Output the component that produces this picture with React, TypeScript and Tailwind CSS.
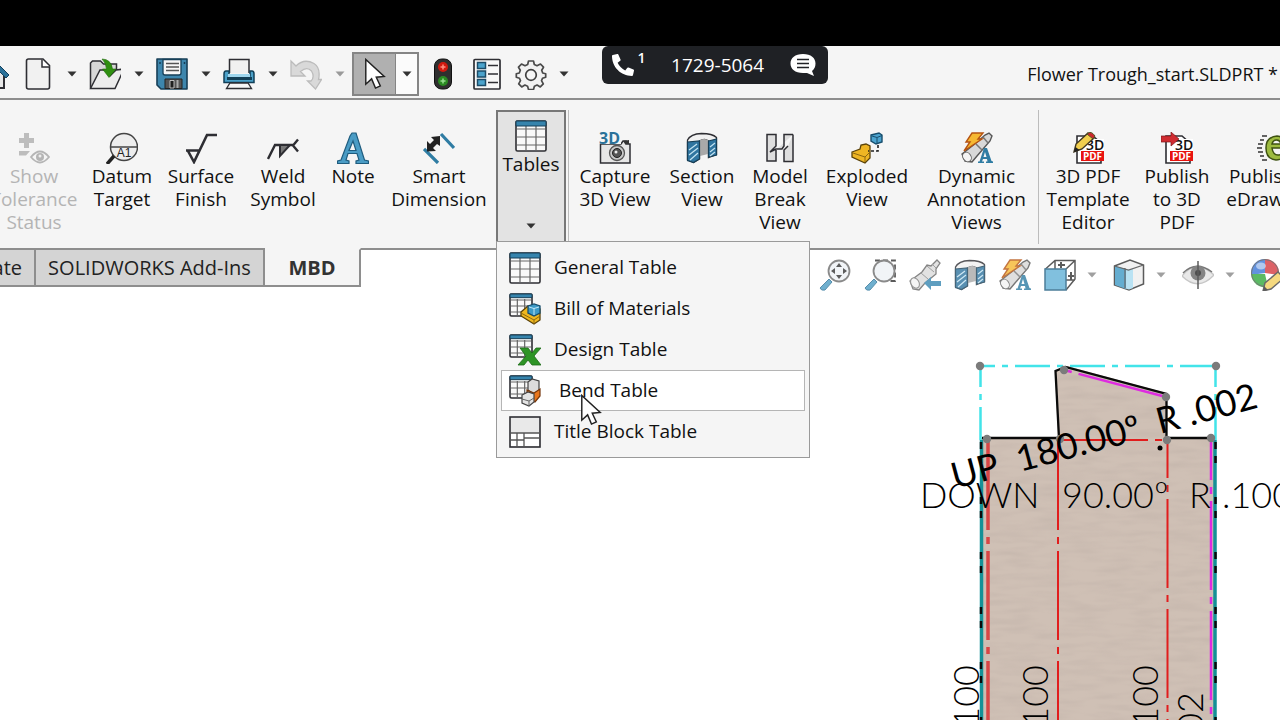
import type { FC, ReactNode } from 'react'
import { FaPhoneAlt } from 'react-icons/fa'

const Svg: FC<{ children: ReactNode; className?: string }> = ({ children, className = '' }) => (
  <svg viewBox="0 0 32 32" fill="none" className={`size-8 shrink-0 ${className}`} aria-hidden="true">
    {children}
  </svg>
)

const Caret: FC<{ className?: string }> = ({ className = 'fill-[#333]' }) => (
  <svg viewBox="0 0 10 6" className={`h-1.5 w-2.5 shrink-0 ${className}`} aria-hidden="true">
    <path d="M.5 .5h9L5 5.5z" />
  </svg>
)

const DARK = '#2e2e33'

const HomeIcon = () => (
  <Svg>
    <path d="M6 15v15h20V15L16 5z" fill="#e8e8e8" stroke={DARK} strokeWidth="2" />
    <path d="M1 17L16 2l15 15-3 3L16 8 4 20z" fill="#2a7199" stroke="#123f5c" />
  </Svg>
)

const NewIcon = () => (
  <Svg>
    <path d="M4.500 3q0-2 2-2H21l6.500 6.500V29q0 2-2 2h-19q-2 0-2-2z" fill="#f1f1f1" stroke={DARK} strokeWidth="1.600" />
    <path d="M20 1.500V9h7.500" fill="#fff" stroke={DARK} strokeWidth="1.500" />
  </Svg>
)

const OpenIcon = () => (
  <Svg>
    <path d="M1.500 30V5l2-2h8l3 3h13v6" fill="#d7d7d7" stroke={DARK} strokeWidth="1.500" />
    <path d="M1.500 30.500L11 12h5l5 6 6-6 8-1-9 19.500z" fill="#ececec" stroke={DARK} strokeWidth="1.500" />
    <path d="M13 1q9 0 10.500 10H27l-7 8.500L13.500 11h4Q17 5 13 1z" fill="#2f8f10" stroke="#1d6a08" strokeWidth=".6" />
  </Svg>
)

const SaveIcon = () => (
  <Svg>
    <path d="M1 1h30v30H5l-4-4z" fill="#3d86ad" stroke="#173f57" strokeWidth="1.600" strokeLinejoin="round" />
    <path d="M7 1.500h18V15q0 2-2 2H9q-2 0-2-2z" fill="#f7f7f7" stroke="#173f57" strokeWidth="1.300" />
    <path d="M10 5.500h13M10 9h13M10 12.500h13" stroke="#555" strokeWidth="1.400" />
    <path d="M9 30.500V21h17v9.500z" fill="#555" stroke="#222" />
    <path d="M14 22.500h4v7.500h-4z" fill="#1f1f1f" stroke="#ddd" strokeWidth=".8" />
    <path d="M21.500 22v8" stroke="#aaa" strokeWidth="2" />
    <path d="M4 4v2M28.500 4v2" stroke="#173f57" strokeWidth="1.500" />
  </Svg>
)

const PrintIcon = () => (
  <Svg>
    <path d="M6.500 15V1.500H26V15" fill="#f0f0f0" stroke={DARK} strokeWidth="1.500" />
    <path d="M3 13q-2 0-2 3v8.500h30V16q0-3-2-3h-2v5H6v-5z" fill="#4aa0c8" stroke="#123f57" strokeWidth="1.500" />
    <path d="M5 16h22v3H5z" fill="#9ed6ee" />
    <path d="M4 20.500h25" stroke="#123f57" strokeWidth="3" />
    <path d="M7 25h18l3.500 5.500H3.500z" fill="#f7f7f7" stroke={DARK} strokeWidth="1.300" />
  </Svg>
)

const UndoIcon = () => (
  <Svg>
    <path
      d="M1 3v15h14l-4.500-4.500Q17 8 21.500 13q3.500 6-.5 10h-3.500l8 8 6-9.500h-3Q31 10 24 5.500 14 0 6 8z"
      fill="#d9d9d9"
      stroke="#bcbcbc"
      strokeWidth="1.300"
    />
  </Svg>
)

const Pointer: FC<{ className?: string }> = ({ className = '' }) => (
  <svg viewBox="0 0 22 33" className={`h-8 w-[22px] ${className}`} aria-hidden="true">
    <path d="M1.500 1.500V27l6-5.500 4 9.500 5-2.200-4.200-9L20.500 19z" className="fill-white stroke-[#222]" strokeWidth="1.500" />
  </svg>
)

const TrafficIcon = () => (
  <Svg>
    <rect x="7.500" y="1" width="17" height="30" rx="7" fill="#2f2f2f" stroke="#111" />
    <circle cx="16" cy="9" r="5" fill="#d0190f" />
    <circle cx="16" cy="23" r="5" fill="#2a8a22" />
    <path d="M16 6.500v5M13.500 9h5" stroke="#ff8e80" strokeWidth="1.500" />
    <path d="M16 20.500v5M13.500 23h5" stroke="#97dd90" strokeWidth="1.500" />
  </Svg>
)

const ListIcon = () => (
  <Svg>
    <rect x="3" y="1.500" width="26" height="29.500" rx="1" fill="#f7f7f7" stroke={DARK} strokeWidth="1.700" />
    {[4.500, 13, 21.500].map(y => (
      <g key={y}>
        <rect x="6.500" y={y} width="8" height="6" fill="#4ba3cc" stroke="#1c4c68" strokeWidth="1.500" />
        <path d={`M17 ${y + 3}h10`} stroke={DARK} strokeWidth="1.500" />
      </g>
    ))}
  </Svg>
)

const GearIcon = () => (
  <Svg>
    <path
      d="M13.500 3h5l.8 3.500 2.700 1.200L25.500 6l3 3.200-1.800 3 1 2.800 3 .8v3.400l-3.200 1-1 2.500 1.800 3.200-3 3-3.200-1.900-2.700 1.200-.9 3.300h-5l-.9-3.300-2.700-1.200L6.700 28.900l-3-3 1.800-3.200-1-2.500-3.200-1v-3.400l3-.8 1-2.800-1.800-3L6.500 6 10 7.700l2.700-1.200z"
      fill="#f2f2f2"
      stroke="#4a4a4a"
      strokeWidth="1.700"
      strokeLinejoin="round"
    />
    <circle cx="16" cy="17" r="5.300" fill="#f5f5f5" stroke="#3f3f3f" strokeWidth="1.700" />
  </Svg>
)

const ToleranceIcon = () => (
  <Svg>
    <path d="M6 1h5v5h5v5h-5v5H6v-5H1V6h5zM1 19h11l-4 4.500H1z" fill="#bdbdbd" />
    <path d="M13 25q9-11 18 0-9 11-18 0z" fill="#f5f5f5" stroke="#b5b5b5" strokeWidth="1.800" />
    <circle cx="22" cy="25" r="4" fill="#b5b5b5" />
    <circle cx="22" cy="24" r="1.500" fill="#eee" />
  </Svg>
)

const DatumIcon = () => (
  <Svg>
    <circle cx="18" cy="15" r="13.500" fill="#ededed" stroke="#444" strokeWidth="1.500" />
    <path d="M4.500 15h27" stroke="#444" strokeWidth="1.500" />
    <text x="18" y="25" textAnchor="middle" className="fill-[#222] font-['Liberation_Sans'] text-[12px]">A1</text>
    <path d="M8 24l-7 8" stroke="#222" strokeWidth="3.500" />
  </Svg>
)

const SurfaceIcon = () => (
  <Svg>
    <path d="M1 18.500h14M3 19l6 11 13-27h10" stroke={DARK} strokeWidth="2.600" />
  </Svg>
)

const WeldIcon = () => (
  <Svg>
    <path d="M1 27l7-14h19M31 7.500l-5 6 5 6" stroke={DARK} strokeWidth="2.400" />
    <path d="M13 13v11l10-11z" fill="#777" stroke={DARK} strokeWidth="2" />
  </Svg>
)

const NoteIcon = () => (
  <Svg>
    <path
      d="M15 1h4l8.500 27 4 1v2.500H19V29l3-1-2-6.500h-9L9 28l3 1v2.500H.500V29l3.500-1L13 4zM16 9l-4 9.500h7z"
      fill="#4a9cc5"
      stroke="#1f5c7e"
      strokeWidth="1.200"
      fillRule="evenodd"
    />
  </Svg>
)

const SmartDimIcon = () => (
  <Svg>
    <path d="M18 2l13 14M1 17l14 14" stroke="#2f7ca3" strokeWidth="3.200" />
    <path d="M17 4v10l-3-2-4 4 3 3-9 .5V9l3 3 4-4-3-3z" fill="#222" />
  </Svg>
)

const Grid: FC<{ size?: number; step?: number }> = ({ size = 30, step = 8 }) => (
  <>
    <rect x="1" y="1" width={size} height={size} rx="1.500" fill="#fafafa" stroke={DARK} strokeWidth="1.600" />
    <path
      d={`M2 ${1 + step}h${size - 2}M2 ${1 + step * 2}h${size - 2}M2 ${1 + step * 3}h${size - 2}M${1 + size / 3} 6v${size - 6}M${1 + (size * 2) / 3} 6v${size - 6}`}
      stroke="#666"
      strokeWidth="1.200"
    />
    <path d={`M1 1h${size}v${size / 6}H1z`} fill="#3684ad" stroke="#173f57" />
  </>
)

const TableIcon = () => (
  <Svg>
    <Grid />
  </Svg>
)

const BomIcon = () => (
  <Svg>
    <Grid size={22} step={6} />
    <path d="M12 19l7-6 12 3v11l-6 4-13-8z" fill="#f0b81f" stroke="#5b430a" strokeWidth="1.300" />
    <path d="M12 20l13 7 6-4M25 27v4" stroke="#8d6810" />
    <path d="M19 13l6-2 6 2v7l-6 3-6-3z" fill="#3d9bc8" stroke="#174d6c" strokeWidth="1.300" />
    <path d="M20 14l5 1.500 5-1.500M25 15v7" stroke="#bfe5f6" />
  </Svg>
)

const DesignIcon = () => (
  <Svg>
    <Grid size={22} step={6} />
    <path d="M11 14h8l4 5 4-5h5l-7 8 7 9h-9l-4-5-4 5H9l8-9z" fill="#2e9426" stroke="#1c6b17" strokeWidth=".8" />
  </Svg>
)

const BendIcon = () => (
  <Svg>
    <Grid size={22} step={6} />
    <path d="M19 7l4-3 7 2v10l-6 3-5-4z" fill="#dcdcdc" stroke="#444" strokeWidth="1.200" />
    <path d="M18 15l7 3 6-4v7l-5 6-8-4z" fill="#e8761d" stroke="#74350a" strokeWidth="1.200" />
    <path d="M13 20l6-3 6 2v8l-5 4-7-3z" fill="#e4e4e4" stroke="#444" strokeWidth="1.200" />
    <path d="M13 24l7 2 5-3M20 26v5" stroke="#666" />
  </Svg>
)

const TitleBlockIcon = () => (
  <Svg>
    <rect x="1" y="1" width="30" height="30" fill="#e9e9e9" stroke={DARK} strokeWidth="1.600" />
    <path d="M2 17h28v13H2z" fill="#fff" />
    <path d="M1 17h30M1 24h14M15 17v14M8 17v14M15 22h16" stroke="#555" strokeWidth="1.300" />
  </Svg>
)

const CaptureIcon = () => (
  <Svg>
    <path d="M1.500 12H22l2-3h3v3h4v19H1.500z" fill="#e6e6e6" stroke={DARK} strokeWidth="1.500" />
    <path d="M24 9l2 3h4V8" fill="#333" />
    <circle cx="18" cy="21" r="7.500" fill="#c9c9c9" stroke="#555" strokeWidth="1.300" />
    <circle cx="18" cy="21" r="4.500" fill="#555" stroke="#222" />
    <circle cx="17" cy="20" r="1.500" fill="#eee" />
    <rect x="0" y="0" width="22" height="12" fill="#f5f5f5" />
    <text x="0" y="12" className="fill-[#2b7299] font-['Open_Sans'] text-[16px] font-bold">3D</text>
  </Svg>
)

const SectionIcon = () => (
  <Svg>
    <path d="M1.500 8q3-6 14-6.500 11 0 15 4v17l-8 3V9q-4-3-9 0v18l-6 3.500-6-3z" fill="#f1f1f1" stroke={DARK} strokeWidth="1.300" />
    <path d="M14 8q4-2 8 0v14l-8 2z" fill="#a9a9a9" />
    <path d="M1.500 10l12-1v18l-6 3.500-6-2zM22.500 9l8-2v16l-8 2z" fill="#3075a0" stroke="#173f57" strokeWidth="1.200" />
    <path d="M3 18l8-6M3 23l9-7M4 28l8-7M24 15l5-4M24 20l5-4M24 24l5-4" stroke="#c4e4f2" strokeWidth="1.200" />
  </Svg>
)

const BreakIcon = () => (
  <Svg>
    <path d="M3 2.500h9V14l-6 6 6-3v12H3z" fill="#dedede" stroke={DARK} strokeWidth="1.500" />
    <path d="M29 2.500h-9V14l-2 3h-5M29 2.500v27h-9V18l4-4" fill="#dedede" stroke={DARK} strokeWidth="1.500" />
  </Svg>
)

const ExplodedIcon = () => (
  <Svg>
    <path d="M1 20l8-3 1-4 5-1 4 2v12l-5 5-13-6z" fill="#eeb523" stroke="#5b430a" strokeWidth="1.300" />
    <path d="M2 21l12 4 5-5M14 25v5" stroke="#8d6810" />
    <path d="M20 3l8-2 3 2v7l-6 2-5-3z" fill="#4ca4cf" stroke="#174d6c" strokeWidth="1.400" />
    <path d="M21 4l5 1.500 5-2M26 6v5" stroke="#174d6c" />
    <path d="M27 13v6H17" stroke="#222" strokeWidth="1.600" strokeDasharray="3 2" />
  </Svg>
)

const DynamicIcon = () => (
  <Svg>
    <path d="M1 22l14-11 9-8 4-2 3 3-2 5-13 15-5 6-7-1z" fill="#d8d8d8" stroke="#555" strokeWidth="1.400" />
    <ellipse cx="6" cy="25" rx="4" ry="5" transform="rotate(-35 6 25)" fill="#f4f4f4" stroke="#666" />
    <path d="M15 12l6 6M22 5l5 6" stroke="#777" strokeWidth="1.500" />
    <path d="M11 1h11l-5 6h4L3 19l6-9H5z" fill="#f6b832" stroke="#b55312" strokeWidth="1.400" />
    <path d="M23 16h3l4.500 13 1.500.5V31h-7v-1.500h1.500L26 27h-4l-1 2.500H23V31h-6v-1.500h1.500zM24 20l-1.500 5h3z" fill="#2f7ca3" fillRule="evenodd" />
  </Svg>
)

const PdfBase = () => (
  <>
    <path d="M5 4h16l8 7v20H5z" fill="#fff" stroke={DARK} strokeWidth="1.600" />
    <path d="M15 7h17v12H15z" fill="#fff" />
    <text x="14" y="18" className="fill-[#111] font-['Open_Sans'] text-[14px] font-semibold">3D</text>
    <rect x="9" y="19" width="23" height="10" fill="#e8130f" />
    <text x="20.500" y="27.500" textAnchor="middle" className="fill-white font-['Open_Sans'] text-[10px] font-bold">PDF</text>
  </>
)

const PdfEditIcon = () => (
  <Svg>
    <PdfBase />
    <path d="M2 20l2-8L16 1l6 5L10 17z" fill="#f1cf4e" stroke="#3f3620" strokeWidth="1.400" />
    <path d="M15 2q4-4 8 2l-2 3z" fill="#c9282d" stroke="#552" />
    <path d="M2 20l1.500-5 4 3z" fill="#222" />
  </Svg>
)

const PdfPublishIcon = () => (
  <Svg>
    <PdfBase />
    <path d="M0 4h10V0l8 7-8 7v-4H0z" fill="#d02c31" stroke="#7c171a" strokeWidth=".7" />
  </Svg>
)

const EDrawingsIcon = () => (
  <Svg>
    <path d="M5 4h5M3 8h4M1 12h5M0 16h5M1 20h5M3 24h4M5 28h5" stroke="#333" strokeWidth="1.500" />
    <path
      d="M29 22q-4 6-10 6-10-1-10-12T20 4q10 1 10 12H15q1 7 6 7 3 0 4-2zM15 12h9q-1-4-4.500-4T15 12z"
      fill="#9dbb40"
      stroke="#3e5212"
      strokeWidth="1.500"
      fillRule="evenodd"
    />
  </Svg>
)

const Lens = () => (
  <>
    <path d="M1 29l9-9 3 3-7 8q-4 1-5-2z" fill="#4c9cc2" stroke="#2f7397" />
    <circle cx="20" cy="12" r="10.500" fill="#eef2f6" stroke="#6d6d6d" strokeWidth="1.800" />
  </>
)

const ZoomFitIcon = () => (
  <Svg>
    <Lens />
    <path d="M20 4l3 4h-6zM20 20l3-4h-6zM12 12l4-3v6zM28 12l-4-3v6z" fill="#333" />
  </Svg>
)

const ZoomAreaIcon = () => (
  <Svg>
    <path d="M11 1.500h20V22H20" stroke="#333" strokeWidth="1.800" strokeDasharray="5 3" />
    <Lens />
  </Svg>
)

const PreviousIcon = () => (
  <Svg>
    <path d="M1 22l12-9 5-7 4 1 6-6 3 3-4 6v5l-11 9-6 7-6-1z" fill="#dcdcdc" stroke="#666" strokeWidth="1.300" />
    <ellipse cx="6" cy="24" rx="4" ry="5.500" transform="rotate(-30 6 24)" fill="#f3f3f3" stroke="#777" />
    <path d="M12 14l7 6M18 7l7 6M23 5l4 4" stroke="#888" />
    <path d="M15 24l7-6v4h10v5H22v4z" fill="#3787b1" />
  </Svg>
)

const CubeFrameIcon = () => (
  <Svg>
    <path d="M1.500 10L11 1.500h20V20l-9 11M22 10l9-8.500M11 2v8M22 21h9" stroke="#333" strokeWidth="1.500" />
    <path d="M17 3v6M14 6h7M27 13v8M24 17h6" stroke="#333" strokeWidth="2" />
    <rect x="1" y="10" width="21" height="21" fill="#62b1d6" stroke="#215e80" strokeWidth="1.500" />
  </Svg>
)

const DisplayIcon = () => (
  <Svg>
    <path d="M1.500 7L17 1l13.500 5v19L16 31 1.500 26z" fill="#eee" stroke="#333" strokeWidth="1.500" />
    <path d="M2 7l11 3v20L2 26z" fill="#3f99c5" />
    <path d="M13 10h7v19l-4 1.500-3-1z" fill="#a8dbf1" />
    <path d="M1.500 7l14 4 15-5M12 9v20" stroke="#444" strokeWidth="1.200" />
  </Svg>
)

const EyeIcon = () => (
  <Svg>
    <path d="M0 17Q14-1 32 16 16 33 0 17z" fill="#e4e4e4" stroke="#b9b9b9" strokeWidth="1.300" />
    <path d="M1 14Q14 1 30 13" stroke="#555" strokeWidth="1.500" />
    <circle cx="16" cy="14" r="7.500" fill="#666" />
    <circle cx="16" cy="14" r="3" fill="#222" />
    <path d="M16 2v28" stroke="#333" strokeWidth="1.500" />
  </Svg>
)

const SphereIcon = () => (
  <Svg>
    <path d="M14 14V0A14 14 0 0 0 0 16z" fill="#3c78d8" />
    <path d="M14 14V0a14 14 0 0 1 14 16z" fill="#d53a40" />
    <path d="M14 15H0a14 14 0 0 0 17 13z" fill="#33a93e" />
    <circle cx="14" cy="14" r="13.500" stroke="#555" />
    <ellipse cx="10" cy="7" rx="5" ry="3.500" fill="#fff" opacity=".5" />
    <path d="M12 32l2-8 13-11 6 6-13 11z" fill="#f3d060" stroke="#444" strokeWidth="1.400" />
    <path d="M12 32l1-5 4 4z" fill="#333" />
  </Svg>
)

const quickActions = [
  { name: 'New', icon: <NewIcon /> },
  { name: 'Open', icon: <OpenIcon /> },
  { name: 'Save', icon: <SaveIcon /> },
  { name: 'Print', icon: <PrintIcon /> },
  { name: 'Undo', icon: <UndoIcon />, disabled: true },
]

const QuickAccess = () => (
  <header className="relative flex h-[54px] items-center border-b-2 border-[#8e8e8e] bg-[#f5f5f5] pt-1">
    <button aria-label="Home" className="flex w-[17px] justify-end pr-[7px]">
      <HomeIcon />
    </button>
    {quickActions.map(({ name, icon, disabled }) => (
      <div key={name} className="flex h-11 shrink-0">
        <button aria-label={name} disabled={disabled} className="flex w-[42px] items-center justify-center">
          {icon}
        </button>
        <button aria-label={`${name} options`} disabled={disabled} className="flex w-[25px] items-center justify-center">
          <Caret className={disabled ? 'fill-[#9a9a9a]' : 'fill-[#333]'} />
        </button>
      </div>
    ))}
    <div className="mr-0.5 flex h-11 shrink-0 border-2 border-[#858585]">
      <button aria-label="Select" className="flex w-[42px] items-center justify-center border-r border-[#858585] bg-[#b0b0b0]">
        <Pointer />
      </button>
      <button aria-label="Select options" className="flex w-[21px] items-center justify-center bg-[#fbfbfb]">
        <Caret />
      </button>
    </div>
    <button aria-label="Rebuild" className="flex w-11 shrink-0 justify-center">
      <TrafficIcon />
    </button>
    <button aria-label="File properties" className="flex w-11 shrink-0 justify-center">
      <ListIcon />
    </button>
    <button aria-label="Options" className="flex w-11 shrink-0 justify-center">
      <GearIcon />
    </button>
    <button aria-label="More options" className="flex h-11 w-[22px] shrink-0 items-center justify-center">
      <Caret />
    </button>
    <h1 className="ml-auto whitespace-nowrap pr-0.5 text-[18px] text-[#111]">Flower Trough_start.SLDPRT *</h1>

    <div className="absolute top-0 left-[47%] flex h-[38px] w-[226px] items-center rounded-md bg-[#1f2125] px-2.5 text-white">
      <FaPhoneAlt className="size-[22px] -scale-x-100 rotate-90" />
      <sup className="ml-1 text-[14px] font-semibold">1</sup>
      <span className="mx-auto text-[19px]">1729-5064</span>
      <svg viewBox="0 0 26 24" className="mr-0.5 h-6 w-[26px]" aria-hidden="true">
        <path d="M13 1C5 1 .500 5 .500 10.500S5 20 13 20h4l7 3-2-5q3.500-3 3.500-7.500C25.500 5 21 1 13 1z" fill="#fff" />
        <path d="M7 6.500h12M7 10.500h12M7 14.500h12" stroke="#1f2125" strokeWidth="1.600" />
      </svg>
    </div>
  </header>
)

const RibbonButton: FC<{ icon: ReactNode; lines: string[]; width: string; disabled?: boolean }> = ({
  icon,
  lines,
  width,
  disabled,
}) => (
  <button
    disabled={disabled}
    className={`flex shrink-0 flex-col items-center pt-8 text-[19px] leading-[23px] whitespace-nowrap text-[#111] disabled:text-[#b4b4b4] ${width}`}
  >
    {icon}
    <span className="mt-px flex flex-col items-center">
      {lines.map(line => (
        <span key={line}>{line}</span>
      ))}
    </span>
  </button>
)

const menuItems = [
  { label: 'General Table', icon: <TableIcon /> },
  { label: 'Bill of Materials', icon: <BomIcon /> },
  { label: 'Design Table', icon: <DesignIcon /> },
  { label: 'Bend Table', icon: <BendIcon />, active: true },
  { label: 'Title Block Table', icon: <TitleBlockIcon /> },
]

const TablesMenu = () => (
  <div className="relative mt-2.5 h-[131px] w-[70px] shrink-0">
    <button
      aria-expanded="true"
      className="flex size-full flex-col items-center border-2 border-b-0 border-[#777] bg-[#e3e3e3] pt-2 text-[19px] leading-[23px] text-[#111]"
    >
      <TableIcon />
      <span className="mt-px">Tables</span>
      <Caret className="mt-auto mb-3 fill-[#333]" />
    </button>
    <ul className="absolute top-full left-0 z-10 w-[314px] border border-[#9a9a9a] bg-[#f5f5f5] px-1 py-[5px]">
      {menuItems.map(({ label, icon, active }) => (
        <li key={label} className="relative">
          <button
            className={`flex h-[41px] w-full items-center border px-[7px] text-[19px] whitespace-nowrap text-[#111] ${
              active ? 'gap-[18px] border-[#b5b5b5] bg-white' : 'gap-[13px] border-transparent'
            }`}
          >
            {icon}
            {label}
          </button>
          {active && <Pointer className="absolute top-6 left-[79px] z-10" />}
        </li>
      ))}
    </ul>
  </div>
)

const Separator: FC<{ className?: string }> = ({ className = '' }) => (
  <div className={`mt-2.5 h-[134px] w-px shrink-0 bg-[#bcbcbc] ${className}`} />
)

const Ribbon = () => (
  <nav className="flex h-[148px] bg-[#f5f5f5]">
    <RibbonButton icon={<ToleranceIcon />} lines={['Show', 'Tolerance', 'Status']} width="-ml-4 w-[100px]" disabled />
    <RibbonButton icon={<DatumIcon />} lines={['Datum', 'Target']} width="w-[76px]" />
    <RibbonButton icon={<SurfaceIcon />} lines={['Surface', 'Finish']} width="w-[82px]" />
    <RibbonButton icon={<WeldIcon />} lines={['Weld', 'Symbol']} width="w-[82px]" />
    <RibbonButton icon={<NoteIcon />} lines={['Note']} width="w-[58px]" />
    <RibbonButton icon={<SmartDimIcon />} lines={['Smart', 'Dimension']} width="w-[114px]" />
    <TablesMenu />
    <Separator className="ml-0.5" />
    <RibbonButton icon={<CaptureIcon />} lines={['Capture', '3D View']} width="w-[92px]" />
    <RibbonButton icon={<SectionIcon />} lines={['Section', 'View']} width="w-[82px]" />
    <RibbonButton icon={<BreakIcon />} lines={['Model', 'Break', 'View']} width="w-[74px]" />
    <RibbonButton icon={<ExplodedIcon />} lines={['Exploded', 'View']} width="w-[100px]" />
    <RibbonButton icon={<DynamicIcon />} lines={['Dynamic', 'Annotation', 'Views']} width="w-[119px]" />
    <Separator className="ml-0.5" />
    <RibbonButton icon={<PdfEditIcon />} lines={['3D PDF', 'Template', 'Editor']} width="w-[98px]" />
    <RibbonButton icon={<PdfPublishIcon />} lines={['Publish', 'to 3D', 'PDF']} width="w-[80px]" />
    <RibbonButton icon={<EDrawingsIcon />} lines={['Publish to', 'eDrawings']} width="w-[112px]" />
  </nav>
)

const viewTools: { name: string; icon: ReactNode; menu?: boolean }[] = [
  { name: 'Zoom to Fit', icon: <ZoomFitIcon /> },
  { name: 'Zoom to Area', icon: <ZoomAreaIcon /> },
  { name: 'Previous View', icon: <PreviousIcon /> },
  { name: 'Section View', icon: <SectionIcon /> },
  { name: 'Dynamic Annotation Views', icon: <DynamicIcon /> },
  { name: 'View Orientation', icon: <CubeFrameIcon />, menu: true },
  { name: 'Display Style', icon: <DisplayIcon />, menu: true },
  { name: 'Hide/Show Items', icon: <EyeIcon />, menu: true },
  { name: 'Edit Appearance', icon: <SphereIcon /> },
]

const TabRow = () => (
  <div className="flex items-start">
    <div className="flex h-[39px] shrink-0 border-b-2 border-[#8e8e8e] text-[20px] text-[#222]">
      <button className="flex w-9 items-center justify-end border-t-2 border-r-2 border-[#8e8e8e] bg-[#d4d4d4] pr-3">
        <span>Evaluate</span>
      </button>
      <button className="w-[229px] whitespace-nowrap border-t-2 border-r-2 border-[#8e8e8e] bg-[#d4d4d4]">
        SOLIDWORKS Add-Ins
      </button>
      <button className="w-24 border-t-2 border-r-2 border-t-transparent border-r-[#8e8e8e] bg-[#f5f5f5] font-bold text-[#333]">
        MBD
      </button>
    </div>
    <div className="flex h-[52px] min-w-0 flex-1 items-center justify-end border-t-2 border-[#8e8e8e]">
      <div className="-mr-[9px] flex shrink-0 opacity-80">
        {viewTools.map(({ name, icon, menu }) => (
          <div key={name} className="flex">
            <button aria-label={name} className="flex w-[45px] justify-center">
              {icon}
            </button>
            {menu && (
              <button aria-label={`${name} options`} className="flex w-6 items-center pl-[5px]">
                <Caret className="fill-[#888]" />
              </button>
            )}
          </div>
        ))}
      </div>
    </div>
  </div>
)

const nodes = [
  [980, 366], [1216, 366], [1064, 370], [1166, 397], [987, 439], [1060, 439], [1167, 440], [1211, 438],
]

const FlatPattern = () => (
  <svg
    viewBox="900 300 380 420"
    className="h-[420px] w-[380px] shrink-0 font-['Lato'] text-[36px] font-light"
    role="img"
    aria-label="Flat pattern"
  >
    <defs>
      <filter id="grain" x="0" y="0" width="100%" height="100%">
        <feTurbulence type="fractalNoise" baseFrequency=".03 .16" numOctaves="2" seed="4" />
        <feColorMatrix values="0 0 0 0 .4  0 0 0 0 .33  0 0 0 0 .3  .4 0 0 0 -.15" />
        <feComposite in2="SourceGraphic" operator="in" />
      </filter>
    </defs>
    <path d="M981 438h77l-3-67 12-5 99 27 1 45h48v290H981z" fill="#cfc0b5" />
    <path d="M981 438h77l-3-67 12-5 99 27 1 45h48v290H981z" filter="url(#grain)" />

    <g fill="none" stroke="#42e4e9" strokeWidth="2.500">
      <path d="M980 366h236" strokeDasharray="35 7 6 7" strokeDashoffset="20" />
      <path d="M980.500 366v74M1215.500 366v74" strokeDasharray="35 7 6 7" strokeDashoffset="14" />
    </g>
    <path d="M982 438h77l-3.500-67 10-4 101 27v44h48" fill="none" stroke="#0a0a0a" strokeWidth="2.300" />
    <path d="M981.500 440v290M1215 440v290" stroke="#149197" strokeWidth="3.500" />
    <path d="M981 442v290M1215.500 442v290" stroke="#0a0a0a" strokeWidth="2.500" strokeDasharray="7 7 7 34" />
    <path d="M988 441v290" stroke="#d84545" strokeWidth="3.500" strokeDasharray="89 7 7 7" />
    <path d="M1058 441v290" stroke="#e11d1d" strokeWidth="2" strokeDasharray="89 7 7 7" />
    <path d="M1167.500 441v290" stroke="#e11d1d" strokeWidth="2" strokeDasharray="89 7 7 7" strokeDashoffset="52" />
    <path d="M1059 440h103" stroke="#e11d1d" strokeWidth="2" strokeDasharray="89 7 7 7" />
    <path d="M1211 440v290" stroke="#de2be0" strokeWidth="2.500" strokeDasharray="89 7 7 7" strokeDashoffset="49" />
    <path d="M1064 370l102 27" stroke="#de2be0" strokeWidth="2.500" strokeDasharray="8 7 200" />
    {nodes.map(([x, y]) => (
      <circle key={`${x}-${y}`} cx={x} cy={y} r="4.200" fill="#7b7b7b" />
    ))}

    <g className="fill-black">
      <text x="920" y="508">DOWN</text>
      <text x="1062" y="508">90.00º</text>
      <text x="1189" y="508">R</text>
      <text x="1222" y="508">.100</text>
      <g className="font-normal">
        <text transform="translate(955 489) rotate(-15)">UP</text>
        <text transform="translate(1020 472) rotate(-15)">180.00º</text>
        <text transform="translate(1160 434) rotate(-15)">R .002</text>
      </g>
      <circle cx="1160" cy="448" r="2.500" />
      {[979, 1048, 1158].map(x => (
        <text key={x} transform={`translate(${x} 665) rotate(-90)`} textAnchor="end">.100</text>
      ))}
      <text transform="translate(1203 692) rotate(-90)" textAnchor="end">.002</text>
    </g>
  </svg>
)

export default function App() {
  return (
    <div className="flex h-screen flex-col overflow-hidden bg-white font-['Open_Sans',sans-serif]">
      <div className="h-[46px] shrink-0 bg-black" />
      <QuickAccess />
      <Ribbon />
      <TabRow />
      <main className="flex flex-1 justify-end overflow-hidden">
        <FlatPattern />
      </main>
    </div>
  )
}
